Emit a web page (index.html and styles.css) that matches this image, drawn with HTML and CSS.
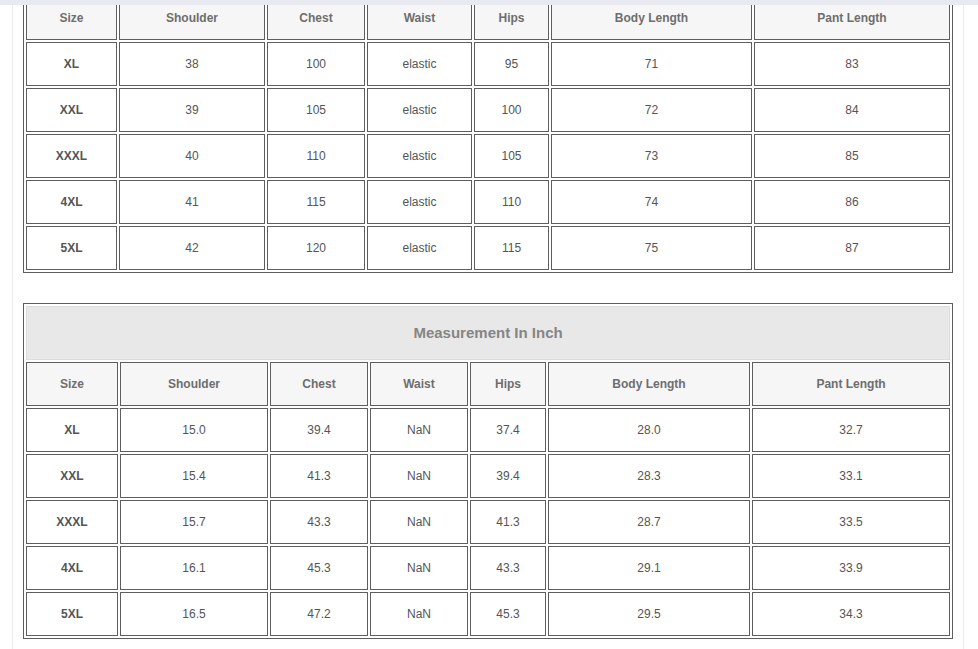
FILE: index.html
```html
<!DOCTYPE html>
<html>
<head>
<meta charset="utf-8">
<link rel="stylesheet" href="styles.css">
</head>
<body>
<div class="topbar"></div>
<div class="panel">
  <table class="size-table first">
    <colgroup>
      <col style="width:91px"><col style="width:146px"><col style="width:98px"><col style="width:105px"><col style="width:75px"><col style="width:201px"><col style="width:196px">
    </colgroup>
    <tr class="head"><th>Size</th><th>Shoulder</th><th>Chest</th><th>Waist</th><th>Hips</th><th>Body Length</th><th>Pant Length</th></tr>
    <tr><td class="sz">XL</td><td>38</td><td>100</td><td>elastic</td><td>95</td><td>71</td><td>83</td></tr>
    <tr><td class="sz">XXL</td><td>39</td><td>105</td><td>elastic</td><td>100</td><td>72</td><td>84</td></tr>
    <tr><td class="sz">XXXL</td><td>40</td><td>110</td><td>elastic</td><td>105</td><td>73</td><td>85</td></tr>
    <tr><td class="sz">4XL</td><td>41</td><td>115</td><td>elastic</td><td>110</td><td>74</td><td>86</td></tr>
    <tr><td class="sz">5XL</td><td>42</td><td>120</td><td>elastic</td><td>115</td><td>75</td><td>87</td></tr>
  </table>

  <table class="size-table second">
    <colgroup>
      <col style="width:92px"><col style="width:148px"><col style="width:98px"><col style="width:98px"><col style="width:76px"><col style="width:202px"><col style="width:198px">
    </colgroup>
    <tr class="title"><td colspan="7">Measurement In Inch</td></tr>
    <tr class="head"><th>Size</th><th>Shoulder</th><th>Chest</th><th>Waist</th><th>Hips</th><th>Body Length</th><th>Pant Length</th></tr>
    <tr><td class="sz">XL</td><td>15.0</td><td>39.4</td><td>NaN</td><td>37.4</td><td>28.0</td><td>32.7</td></tr>
    <tr><td class="sz">XXL</td><td>15.4</td><td>41.3</td><td>NaN</td><td>39.4</td><td>28.3</td><td>33.1</td></tr>
    <tr><td class="sz">XXXL</td><td>15.7</td><td>43.3</td><td>NaN</td><td>41.3</td><td>28.7</td><td>33.5</td></tr>
    <tr><td class="sz">4XL</td><td>16.1</td><td>45.3</td><td>NaN</td><td>43.3</td><td>29.1</td><td>33.9</td></tr>
    <tr><td class="sz">5XL</td><td>16.5</td><td>47.2</td><td>NaN</td><td>45.3</td><td>29.5</td><td>34.3</td></tr>
  </table>
</div>
</body>
</html>
```

FILE: styles.css
```css
html, body {
  margin: 0;
  padding: 0;
  background: #ffffff;
  font-family: "Liberation Sans", Arial, sans-serif;
}

.topbar {
  position: absolute;
  left: 0;
  top: 0;
  width: 100%;
  height: 5px;
  background: #e9e9f1;
  z-index: 2;
}

.panel {
  display: flow-root;
  margin-left: 12px;
  width: 930px;
  padding: 0 10px 10px;
  border-left: 1px solid #ececec;
  border-right: 1px solid #ececec;
}

.size-table {
  width: 930px;
  table-layout: fixed;
  border-collapse: separate;
  border-spacing: 2px;
  border: 1px solid #5e5e5e;
  font-size: 12px;
  color: #555555;
}

.size-table.first {
  margin-top: -7px;
}

.size-table.second {
  margin-top: 30px;
}

.size-table tr {
  height: 44px;
}

.size-table td,
.size-table th {
  border: 1px solid #5e5e5e;
  padding: 0;
  text-align: center;
  vertical-align: middle;
  background: #ffffff;
}

.size-table th {
  background: #f6f6f6;
  color: #6e6e6e;
  font-weight: bold;
}

.size-table td.sz {
  font-weight: bold;
  color: #555555;
}

.size-table tr.title {
  height: 54px;
}

.size-table tr.title td {
  background: #e8e8e8;
  border-color: #dcdcdc;
  font-size: 15px;
  font-weight: bold;
  color: #858585;
  padding-bottom: 2px;
}
```
